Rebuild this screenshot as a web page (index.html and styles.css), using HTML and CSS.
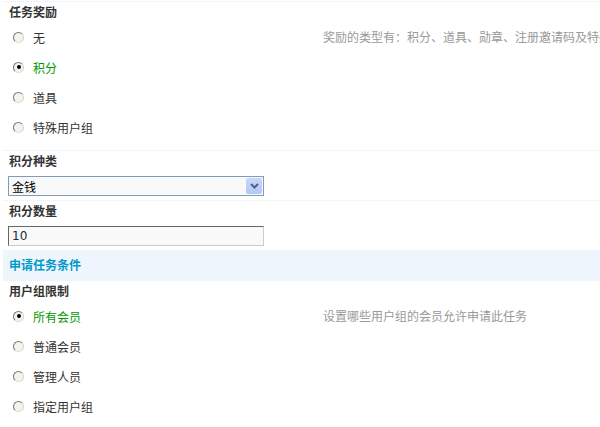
FILE: index.html
```html
<!DOCTYPE html>
<html>
<head>
  <meta charset="utf-8">
  <title>任务设置</title>
  <link rel="stylesheet" href="styles.css">
</head>
<body>
  <div class="form-table">

    <!-- 任务奖励 -->
    <div class="row first">
      <div class="row-title">任务奖励</div>
      <div class="row-body">
        <div class="row-form">
          <label class="option"><input type="radio" name="reward" value="0"> <span>无</span></label>
          <label class="option checked"><input type="radio" name="reward" value="1" checked> <span>积分</span></label>
          <label class="option"><input type="radio" name="reward" value="2"> <span>道具</span></label>
          <label class="option"><input type="radio" name="reward" value="3"> <span>特殊用户组</span></label>
        </div>
        <div class="tips">奖励的类型有：积分、道具、勋章、注册邀请码及特殊用户组</div>
      </div>
    </div>

    <div class="row">
      <div class="row-title">积分种类</div>
      <div class="row-field">
        <span class="select-wrap">
          <select class="ps">
            <option>金钱</option>
            <option>威望</option>
          </select>
          <span class="select-btn">
            <svg width="9" height="6" viewBox="0 0 9 6"><path d="M1 1 L4.5 4.5 L8 1" fill="none" stroke="#4d6185" stroke-width="2"/></svg>
          </span>
        </span>
      </div>
    </div>

    <div class="row">
      <div class="row-title">积分数量</div>
      <div class="row-field">
        <input type="text" class="txt" value="10">
      </div>
    </div>

    <div class="partition">申请任务条件</div>

    <div class="row">
      <div class="row-title">用户组限制</div>
      <div class="row-body">
        <div class="row-form">
          <label class="option checked"><input type="radio" name="group" value="all" checked> <span>所有会员</span></label>
          <label class="option"><input type="radio" name="group" value="member"> <span>普通会员</span></label>
          <label class="option"><input type="radio" name="group" value="admin"> <span>管理人员</span></label>
          <label class="option"><input type="radio" name="group" value="custom"> <span>指定用户组</span></label>
        </div>
        <div class="tips">设置哪些用户组的会员允许申请此任务</div>
      </div>
    </div>

  </div>
</body>
</html>
```

FILE: styles.css
```css
body {
  margin: 0;
  padding-top: 1px;
  font: 12px "Noto Sans CJK SC", "Liberation Sans", sans-serif;
  color: #333;
  background: #fff;
  overflow: hidden;
}

.form-table {
  margin-left: 3px;
}

.row {
  border-top: 1px dotted #deeffb;
}

.row-title {
  height: 20px;
  line-height: 20px;
  padding-left: 6px;
  font-weight: bold;
  color: #333;
}

.row-body {
  display: grid;
  grid-template-columns: 320px 1fr;
  padding-bottom: 8px;
}

.row-form {
  display: flex;
  flex-direction: column;
}

.option {
  display: flex;
  align-items: center;
  height: 30px;
  padding-left: 10px;
  gap: 9px;
}

.option.checked span {
  color: #090;
}

.option input {
  appearance: none;
  -webkit-appearance: none;
  margin: 0;
  width: 11px;
  height: 11px;
  border-radius: 50%;
  border: 1.5px solid;
  border-color: #7a776c #d6d4ca #e0ded5 #7a776c;
  background: #f4f3ec;
  box-sizing: border-box;
  display: grid;
  place-items: center;
}

.option input:checked::after {
  content: "";
  width: 4px;
  height: 4px;
  border-radius: 50%;
  background: #000;
}

.tips {
  height: 30px;
  line-height: 30px;
  color: #999;
  white-space: nowrap;
  overflow: hidden;
}

.row-field {
  padding: 5px 0 4px 5px;
}

.select-wrap {
  position: relative;
  display: inline-block;
  width: 256px;
  height: 20px;
}

.ps {
  appearance: none;
  -webkit-appearance: none;
  width: 256px;
  height: 20px;
  margin: 0;
  padding: 0 0 0 3px;
  border: 1px solid #7f9db9;
  background: #f9f9f9;
  font: 12px "Noto Sans CJK SC", sans-serif;
  color: #000;
  box-sizing: border-box;
}

.select-btn {
  position: absolute;
  top: 2px;
  right: 2px;
  width: 16px;
  height: 16px;
  border-radius: 2px;
  background: linear-gradient(#c8d6fb, #b4c7f5);
  display: flex;
  align-items: center;
  justify-content: center;
  pointer-events: none;
}

.txt {
  width: 256px;
  height: 20px;
  margin: 0;
  padding: 0 3px;
  border: 1px solid;
  border-color: #666 #ccc #ccc #666;
  background: #f9f9f9;
  font: 12px "DejaVu Sans", Tahoma, sans-serif;
  color: #1b2a44;
  box-sizing: border-box;
}

.partition {
  height: 30px;
  line-height: 30px;
  padding-left: 6px;
  background: #eef5fc;
  color: #09c;
  font-weight: bold;
}
```
